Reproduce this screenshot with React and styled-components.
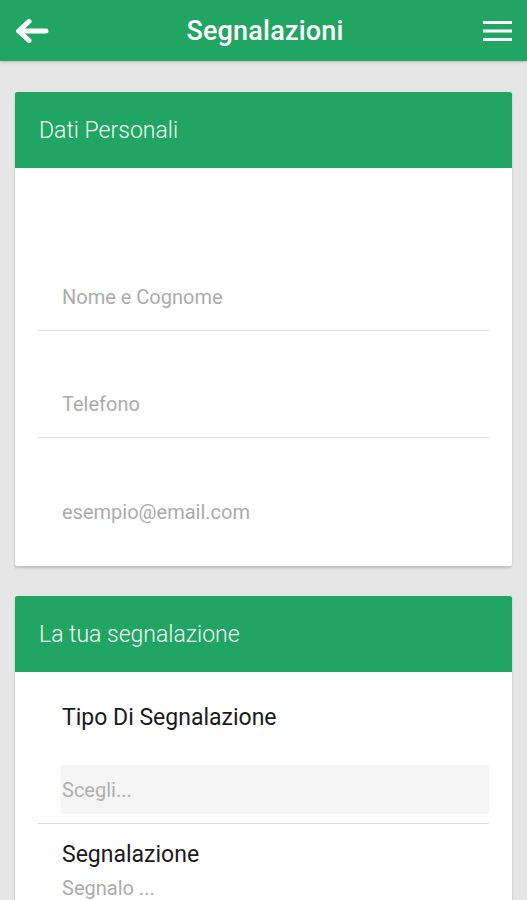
import styled, { createGlobalStyle } from 'styled-components'

const GlobalStyle = createGlobalStyle`
  html, body {
    margin: 0;
    padding: 0;
    background: #e6e6e6;
    font-family: Roboto, "Noto Sans", sans-serif;
  }
`;

const Page = styled.div`
  min-height: 900px;
  background: #e6e6e6;
`;

const TopBar = styled.header`
  height: 61px;
  background: #21a562;
  display: flex;
  align-items: center;
  justify-content: space-between;
  padding: 0 15px 0 14px;
  box-shadow: 0 1px 3px rgba(0, 0, 0, 0.2);
`;

const Title = styled.h1`
  margin: 0 0 0 -2px;
  color: #fff;
  font-size: 27px;
  font-weight: 500;
  letter-spacing: 0.2px;
`;

const IconButton = styled.button`
  background: none;
  border: 0;
  padding: 0;
  display: flex;
  align-items: center;
  cursor: pointer;
`;

const Content = styled.main`
  display: flex;
  flex-direction: column;
  gap: 30px;
  padding: 31px 15px 0 15px;
`;

const Card = styled.section`
  background: #fff;
  border-radius: 2px;
  box-shadow: 0 2px 3px rgba(0, 0, 0, 0.18);
  overflow: hidden;
`;

const CardHeader = styled.div`
  height: 76px;
  background: #21a562;
  display: flex;
  align-items: center;
  padding: 0 24px;
  color: #f3fbf6;
  font-size: 23px;
  font-weight: 300;
`;

const CardBody = styled.div`
  padding: ${p => p.$pad || '0 23px'};
`;

const Field = styled.div`
  height: 107px;
  display: flex;
  align-items: flex-end;
  padding: 0 0 21px 24px;
  box-sizing: border-box;
  border-bottom: ${p => (p.$last ? '0' : '1px solid #dcdcdc')};
  color: #ababab;
  font-size: 20px;
  line-height: 24px;
`;

const Label = styled.div`
  padding-left: 24px;
  margin-top: ${p => p.$gap || 0}px;
  color: #1a1a1a;
  font-size: 23px;
  line-height: 28px;
`;

const Select = styled.div`
  margin: 33px 0 0 23px;
  height: 49px;
  background: #f5f5f5;
  display: flex;
  align-items: center;
  color: #b0b0b0;
  font-size: 20px;
  padding-left: 1px;
`;

const Divider = styled.hr`
  margin: 9px 0 0 0;
  border: 0;
  border-top: 1px solid #dcdcdc;
`;

const Hint = styled.div`
  padding-left: 24px;
  margin-top: 6px;
  color: #ababab;
  font-size: 20px;
  line-height: 26px;
`;

const BackIcon = () => (
  <svg width="35" height="26" viewBox="0 0 35 26">
    <path d="M32 13 H6 M15 3.5 L4.5 13 L15 22.5" fill="none" stroke="#fff" strokeWidth="5" strokeLinecap="round" strokeLinejoin="round" />
  </svg>
);

const MenuIcon = () => (
  <svg width="29" height="22" viewBox="0 0 29 22">
    <rect x="0" y="1" width="29" height="3" fill="#fff" />
    <rect x="0" y="9.5" width="29" height="3" fill="#fff" />
    <rect x="0" y="18" width="29" height="3" fill="#fff" />
  </svg>
);

export default function App() {
  return (
    <Page>
      <GlobalStyle />
      <TopBar>
        <IconButton aria-label="Indietro"><BackIcon /></IconButton>
        <Title>Segnalazioni</Title>
        <IconButton aria-label="Menu"><MenuIcon /></IconButton>
      </TopBar>
      <Content>
        <Card>
          <CardHeader>Dati Personali</CardHeader>
          <CardBody $pad="56px 23px 21px 23px">
            <Field>Nome e Cognome</Field>
            <Field>Telefono</Field>
            <Field $last>esempio@email.com</Field>
          </CardBody>
        </Card>
        <Card>
          <CardHeader>La tua segnalazione</CardHeader>
          <CardBody $pad="32px 23px 20px 23px">
            <Label>Tipo Di Segnalazione</Label>
            <Select>Scegli...</Select>
            <Divider />
            <Label $gap={17}>Segnalazione</Label>
            <Hint>Segnalo ...</Hint>
          </CardBody>
        </Card>
      </Content>
    </Page>
  );
}
